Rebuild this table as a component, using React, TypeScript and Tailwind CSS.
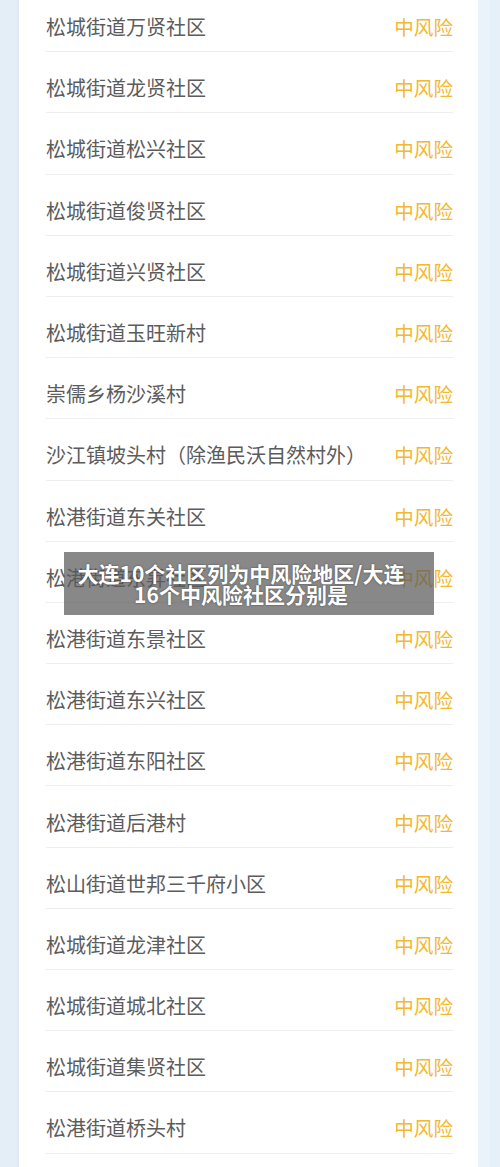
import React from "react";

const rows = [
  "松城街道万贤社区",
  "松城街道龙贤社区",
  "松城街道松兴社区",
  "松城街道俊贤社区",
  "松城街道兴贤社区",
  "松城街道玉旺新村",
  "崇儒乡杨沙溪村",
  "沙江镇坡头村（除渔民沃自然村外）",
  "松港街道东关社区",
  "松港街道东昇社区",
  "松港街道东景社区",
  "松港街道东兴社区",
  "松港街道东阳社区",
  "松港街道后港村",
  "松山街道世邦三千府小区",
  "松城街道龙津社区",
  "松城街道城北社区",
  "松城街道集贤社区",
  "松港街道桥头村",
];

export default function App() {
  return (
    <div
      className="relative w-[500px] h-[1167px] overflow-hidden bg-[#e6f0f8] flex"
      style={{ fontFamily: '"Noto Sans CJK SC", "Noto Sans", sans-serif' }}
    >
      <div className="w-[19px] shrink-0 bg-[#e4eef7]" />
      <div className="w-[459px] shrink-0 bg-white pl-[27px] pr-[25px] shadow-[0_0_2px_rgba(180,200,220,0.5)]">
        <div className="-mt-[9px] flex flex-col">
          {rows.map((r) => (
            <div
              key={r}
              className="h-[61.2px] shrink-0 pt-[12px] flex items-center justify-between border-b border-[#eeeeee]"
            >
              <span className="text-[20px] leading-[20px] text-[#5c5c5c] whitespace-nowrap">{r}</span>
              <span className="text-[19.6px] leading-[20px] text-[#f3b730]">中风险</span>
            </div>
          ))}
        </div>
      </div>
      <div className="w-[12px] shrink-0 bg-[#ebf3fa]" />
      <div className="flex-1 bg-[#e6f0f8]" />

      <div className="absolute left-[64px] top-[552px] w-[370px] h-[63px] bg-[rgba(90,90,90,0.72)] pl-[10px] pr-[26px] flex items-center justify-center">
        <p
          className="text-white font-bold text-[21px] leading-[21px] text-center [text-shadow:0_0_2px_rgba(0,0,0,0.5)]"
        >
          大连10个社区列为中风险地区/大连16个中风险社区分别是
        </p>
      </div>
    </div>
  );
}
